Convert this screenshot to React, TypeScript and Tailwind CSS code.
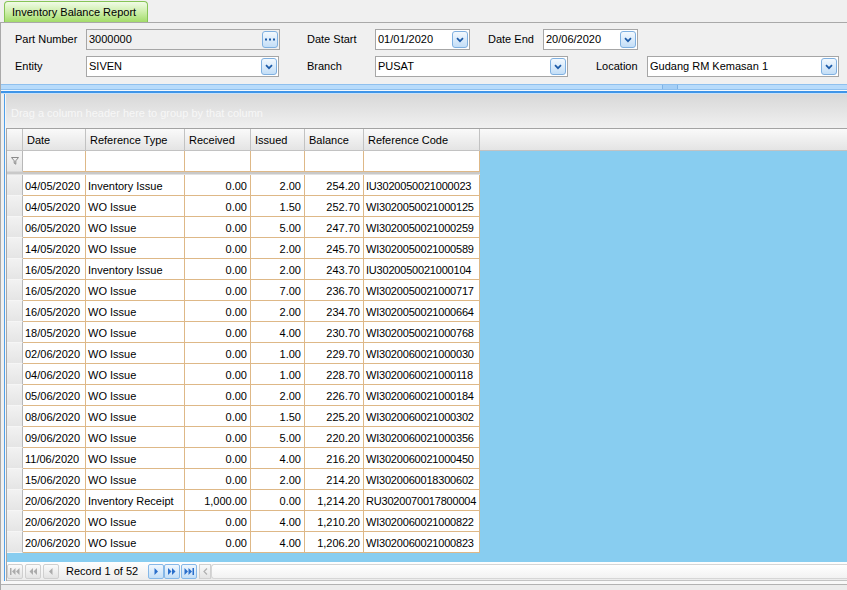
import React from "react";

const rows: string[][] = [
  ["04/05/2020", "Inventory Issue", "0.00", "2.00", "254.20", "IU3020050021000023"],
  ["04/05/2020", "WO Issue", "0.00", "1.50", "252.70", "WI3020050021000125"],
  ["06/05/2020", "WO Issue", "0.00", "5.00", "247.70", "WI3020050021000259"],
  ["14/05/2020", "WO Issue", "0.00", "2.00", "245.70", "WI3020050021000589"],
  ["16/05/2020", "Inventory Issue", "0.00", "2.00", "243.70", "IU3020050021000104"],
  ["16/05/2020", "WO Issue", "0.00", "7.00", "236.70", "WI3020050021000717"],
  ["16/05/2020", "WO Issue", "0.00", "2.00", "234.70", "WI3020050021000664"],
  ["18/05/2020", "WO Issue", "0.00", "4.00", "230.70", "WI3020050021000768"],
  ["02/06/2020", "WO Issue", "0.00", "1.00", "229.70", "WI3020060021000030"],
  ["04/06/2020", "WO Issue", "0.00", "1.00", "228.70", "WI3020060021000118"],
  ["05/06/2020", "WO Issue", "0.00", "2.00", "226.70", "WI3020060021000184"],
  ["08/06/2020", "WO Issue", "0.00", "1.50", "225.20", "WI3020060021000302"],
  ["09/06/2020", "WO Issue", "0.00", "5.00", "220.20", "WI3020060021000356"],
  ["11/06/2020", "WO Issue", "0.00", "4.00", "216.20", "WI3020060021000450"],
  ["15/06/2020", "WO Issue", "0.00", "2.00", "214.20", "WI3020060018300602"],
  ["20/06/2020", "Inventory Receipt", "1,000.00", "0.00", "1,214.20", "RU3020070017800004"],
  ["20/06/2020", "WO Issue", "0.00", "4.00", "1,210.20", "WI3020060021000822"],
  ["20/06/2020", "WO Issue", "0.00", "4.00", "1,206.20", "WI3020060021000823"],
];

const headers = ["Date", "Reference Type", "Received", "Issued", "Balance", "Reference Code"];
const widthCls = ["w-[63px]", "w-[99px]", "w-[66px]", "w-[54px]", "w-[59px]", "w-[116px]"];
const alignCls = [
  "text-left pl-[2px]",
  "text-left pl-[2px]",
  "text-right pr-[3px]",
  "text-right pr-[3px]",
  "text-right pr-[3px]",
  "text-left pl-[2px] tracking-[-0.2px]",
];

function DropBtn() {
  return (
    <div className="w-[16px] h-[17px] shrink-0 rounded-[3px] border border-[#7fb0e0] bg-gradient-to-b from-[#f3f9fe] to-[#c3def7] flex items-center justify-center">
      <svg width="8" height="6" viewBox="0 0 8 6">
        <path d="M1 1.2 L4 4.2 L7 1.2" stroke="#1d5ba8" strokeWidth="1.7" fill="none" />
      </svg>
    </div>
  );
}

function EllipsisBtn() {
  return (
    <div className="w-[16px] h-[17px] shrink-0 rounded-[3px] border border-[#7fb0e0] bg-gradient-to-b from-[#f3f9fe] to-[#c3def7] flex items-center justify-center">
      <svg width="10" height="3" viewBox="0 0 10 3">
        <rect x="0" y="0.5" width="2" height="2" fill="#1d5ba8" />
        <rect x="4" y="0.5" width="2" height="2" fill="#1d5ba8" />
        <rect x="8" y="0.5" width="2" height="2" fill="#1d5ba8" />
      </svg>
    </div>
  );
}

function Field({ w, value, gray, ellipsis }: { w: string; value: string; gray?: boolean; ellipsis?: boolean }) {
  return (
    <div className={`${w} h-[21px] shrink-0 border border-[#a6a6a6] ${gray ? "bg-[#f0f0f0]" : "bg-white"} flex items-center pl-[2px] pr-[1px]`}>
      <span className="flex-1 whitespace-nowrap overflow-hidden leading-[19px]">{value}</span>
      {ellipsis ? <EllipsisBtn /> : <DropBtn />}
    </div>
  );
}

type Glyph = "first" | "prevPage" | "prev" | "next" | "nextPage" | "last";

function NavGlyph({ kind, color }: { kind: Glyph; color: string }) {
  const shapes: Record<Glyph, React.ReactNode> = {
    first: (
      <>
        <rect x="0" y="0" width="1.5" height="7" fill={color} />
        <polygon points="5.5,0 2,3.5 5.5,7" fill={color} />
        <polygon points="9.5,0 6,3.5 9.5,7" fill={color} />
      </>
    ),
    prevPage: (
      <>
        <polygon points="5,0 1.5,3.5 5,7" fill={color} />
        <polygon points="9,0 5.5,3.5 9,7" fill={color} />
      </>
    ),
    prev: <polygon points="6.5,0 3,3.5 6.5,7" fill={color} />,
    next: <polygon points="3.5,0 7,3.5 3.5,7" fill={color} />,
    nextPage: (
      <>
        <polygon points="1,0 4.5,3.5 1,7" fill={color} />
        <polygon points="5,0 8.5,3.5 5,7" fill={color} />
      </>
    ),
    last: (
      <>
        <polygon points="0.5,0 4,3.5 0.5,7" fill={color} />
        <polygon points="4.5,0 8,3.5 4.5,7" fill={color} />
        <rect x="8.5" y="0" width="1.5" height="7" fill={color} />
      </>
    ),
  };
  return (
    <svg width="10" height="7" viewBox="0 0 10 7">
      {shapes[kind]}
    </svg>
  );
}

function NavBtn({ kind, enabled, cls = "" }: { kind: Glyph; enabled?: boolean; cls?: string }) {
  return enabled ? (
    <div className={`${cls} w-[16px] h-[15px] shrink-0 rounded-[2px] border border-[#86b8e8] bg-gradient-to-b from-[#f0f7fe] to-[#c4dff7] flex items-center justify-center`}>
      <NavGlyph kind={kind} color="#2a6fcb" />
    </div>
  ) : (
    <div className={`${cls} w-[16px] h-[15px] shrink-0 rounded-[2px] border border-[#cfcfcf] bg-gradient-to-b from-[#fbfbfb] to-[#e3e3e3] flex items-center justify-center`}>
      <NavGlyph kind={kind} color="#ababab" />
    </div>
  );
}

function Funnel() {
  return (
    <svg width="8" height="8" viewBox="0 0 8 8">
      <path d="M0.5 0.5 H7.5 L4.8 3.8 V7.2 L3.2 6.2 V3.8 Z" stroke="#8a8a8a" strokeWidth="1" fill="none" />
    </svg>
  );
}

export default function App() {
  return (
    <div className="w-[847px] h-[590px] overflow-hidden bg-[#f0f0f0] text-[11px] text-black font-['Liberation_Sans',Arial,sans-serif] flex flex-col">
      {/* Tab strip */}
      <div className="h-[22px] shrink-0 flex items-end pl-[4px]">
        <div className="w-[144px] h-[21px] rounded-t-[4px] border border-b-0 border-[#86c456] bg-gradient-to-b from-[#f1fbe6] via-[#cdeeaa] to-[#a3dc68] pl-[7px] leading-[20px] whitespace-nowrap">
          Inventory Balance Report
        </div>
      </div>

      {/* Panel */}
      <div className="flex-1 flex flex-col border-t border-l border-[#a9a9a9] min-h-0">
        {/* Form */}
        <div className="h-[61px] shrink-0 flex flex-col pt-[6px] gap-[6px]">
          <div className="flex items-center h-[21px]">
            <div className="w-[85px] shrink-0 pl-[14px] whitespace-nowrap">Part Number</div>
            <Field w="w-[194px]" value="3000000" gray ellipsis />
            <div className="w-[68px] shrink-0 ml-[27px] whitespace-nowrap">Date Start</div>
            <Field w="w-[95px]" value="01/01/2020" />
            <div className="w-[55px] shrink-0 ml-[18px] whitespace-nowrap">Date End</div>
            <Field w="w-[95px]" value="20/06/2020" />
          </div>
          <div className="flex items-center h-[21px]">
            <div className="w-[85px] shrink-0 pl-[14px] whitespace-nowrap">Entity</div>
            <Field w="w-[193px]" value="SIVEN" />
            <div className="w-[68px] shrink-0 ml-[28px] whitespace-nowrap">Branch</div>
            <Field w="w-[193px]" value="PUSAT" />
            <div className="w-[51px] shrink-0 ml-[28px] whitespace-nowrap">Location</div>
            <Field w="w-[192px]" value="Gudang RM Kemasan 1" />
          </div>
        </div>

        {/* Splitter */}
        <div className="h-[10px] shrink-0 flex flex-col">
          <div className="h-[1px] bg-[#8fc0ee]" />
          <div className="h-[4px] bg-[#b7dbfb] flex">
            <div className="w-[661px]" />
            <div className="w-[16px] h-full border-l border-r border-[#7fb3e6] bg-[#a5cff6]" />
          </div>
          <div className="h-[1px] bg-[#8fc0ee]" />
          <div className="h-[1px] bg-[#f4f9fe]" />
          <div className="h-[2px] bg-[#3f95e8]" />
          <div className="h-[1px] bg-[#c9e2f8]" />
        </div>

        {/* Grid */}
        <div className="flex-1 min-h-0 flex flex-col ml-[3px] border-l border-[#4f9fe9]">
          <div className="flex-1 min-h-0 flex flex-col border-l border-[#f6f6f6]">
            {/* Group panel */}
            <div className="h-[35px] shrink-0 bg-gradient-to-b from-[#d8d8d8] to-[#f0f0f0] border-b border-[#a3a3a3] pl-[5px] pt-[11px] text-[#f7f7f7] whitespace-nowrap">
              Drag a column header here to group by that column
            </div>

            <div className="flex-1 min-h-0 flex flex-col border-l border-[#a8a8a8]">
              {/* Header row */}
              <div className="h-[22px] shrink-0 flex">
                <div className="w-[16px] shrink-0 border-r border-b border-[#c2c2c2] bg-gradient-to-b from-[#fafafa] to-[#e4e4e4]" />
                {headers.map((h, i) => (
                  <div
                    key={h}
                    className={`${widthCls[i]} shrink-0 border-r border-b border-[#c2c2c2] bg-gradient-to-b from-[#fafafa] to-[#e4e4e4] pl-[4px] pt-[1px] leading-[21px] whitespace-nowrap`}
                  >
                    {h}
                  </div>
                ))}
                <div className="flex-1 border-b border-[#c2c2c2] bg-gradient-to-b from-[#fafafa] to-[#e4e4e4]" />
              </div>

              {/* Body */}
              <div className="flex-1 min-h-0 bg-[#88cdf0] flex">
                <div className="w-[473px] shrink-0 flex flex-col">
                  {/* Filter row */}
                  <div className="h-[21px] flex">
                    <div className="w-[16px] shrink-0 border-r border-b border-r-[#b8b8b8] border-b-[#d8d8d8] bg-gradient-to-b from-[#f5f5f5] to-[#e6e6e6] flex items-center justify-center">
                      <Funnel />
                    </div>
                    {headers.map((h, i) => (
                      <div key={h} className={`${widthCls[i]} shrink-0 border-r border-b border-[#deb887] bg-white`} />
                    ))}
                  </div>
                  {/* Separator */}
                  <div className="h-[3px] bg-[#c9c9c9] border-b border-[#e2e2e2]" />
                  {/* Data rows */}
                  {rows.map((r, ri) => (
                    <div key={ri} className="h-[21px] flex">
                      <div className="w-[16px] shrink-0 border-r border-b border-r-[#b8b8b8] border-b-[#f6f6f6] bg-gradient-to-b from-[#f2f2f2] to-[#e5e5e5]" />
                      {r.map((c, ci) => (
                        <div
                          key={ci}
                          className={`${widthCls[ci]} ${alignCls[ci]} shrink-0 border-r border-b border-[#deb887] bg-white pt-[2px] leading-[18px] whitespace-nowrap overflow-hidden`}
                        >
                          {c}
                        </div>
                      ))}
                    </div>
                  ))}
                </div>
                <div className="flex-1" />
              </div>

              {/* Navigator */}
              <div className="h-[19px] shrink-0 bg-gradient-to-b from-[#fefefe] to-[#ececec] border-b border-[#c4c4c4] flex items-center">
                <NavBtn kind="first" />
                <NavBtn kind="prevPage" cls="ml-[2px]" />
                <NavBtn kind="prev" cls="ml-[2px]" />
                <div className="w-[89px] shrink-0 pl-[7px] whitespace-nowrap leading-[15px]">Record 1 of 52</div>
                <NavBtn kind="next" enabled />
                <NavBtn kind="nextPage" enabled />
                <NavBtn kind="last" enabled cls="ml-[1px]" />
                <div className="w-[12px] h-[15px] shrink-0 ml-[2px] border border-[#d0d0d0] bg-gradient-to-b from-[#fafafa] to-[#e4e4e4] flex items-center justify-center">
                  <svg width="5" height="7" viewBox="0 0 5 7">
                    <path d="M4 0.5 L1 3.5 L4 6.5" stroke="#b0b0b0" strokeWidth="1.2" fill="none" />
                  </svg>
                </div>
                <div className="flex-1 h-[15px] rounded-l-[3px] border border-r-0 border-[#d6d6d6] bg-gradient-to-b from-[#ffffff] to-[#f2f2f2]" />
              </div>
            </div>
          </div>
        </div>

        {/* Bottom frame */}
        <div className="h-[3px] shrink-0 bg-[#f8f8f8]" />
        <div className="h-[1px] shrink-0 bg-[#b2b2b2]" />
        <div className="h-[5px] shrink-0 bg-[#ececec]" />
      </div>
    </div>
  );
}
